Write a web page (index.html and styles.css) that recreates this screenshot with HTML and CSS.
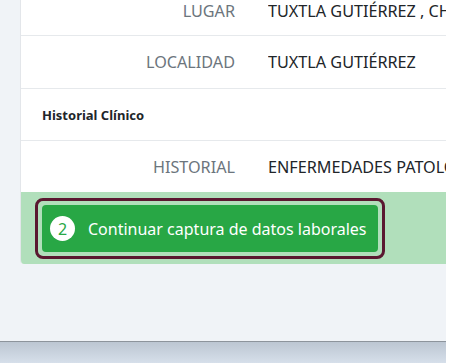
FILE: index.html
```html
<!DOCTYPE html>
<html lang="es">
<head>
<meta charset="utf-8">
<title>Historial</title>
<link rel="stylesheet" href="styles.css">
</head>
<body>
<div class="screen">
  <div class="page">
    <div class="card">
      <div class="row first">
        <div class="label">LUGAR</div>
        <div class="value">TUXTLA GUTIÉRREZ , CHIAPAS</div>
      </div>
      <div class="row">
        <div class="label">LOCALIDAD</div>
        <div class="value">TUXTLA GUTIÉRREZ</div>
      </div>
      <div class="section">Historial Clínico</div>
      <div class="row last">
        <div class="label">HISTORIAL</div>
        <div class="value">ENFERMEDADES PATOLÓGICAS</div>
      </div>
      <div class="footer">
        <div class="ring">
          <button class="btn"><span class="num">2</span><span class="btn-text">Continuar captura de datos laborales</span></button>
        </div>
      </div>
    </div>
  </div>
  <div class="taskbar"></div>
</div>
</body>
</html>
```
FILE: styles.css
```css
html, body {
  margin: 0;
  padding: 0;
  background: #ffffff;
  font-family: "Noto Sans", "Open Sans", sans-serif;
  overflow: hidden;
}
.screen {
  width: 446px;
  display: flex;
  flex-direction: column;
}
.page {
  height: 341px;
  padding-left: 20px;
  background: #f0f3f7;
  overflow: hidden;
}
.card {
  margin-top: -14px;
  background: #ffffff;
  border-left: 1px solid #e3e6ea;
  border-bottom-left-radius: 4px;
  overflow: hidden;
}
.row {
  display: grid;
  grid-template-columns: 214px 1fr;
  column-gap: 33px;
  align-items: center;
  height: 52px;
  border-bottom: 1px solid #e6e9ec;
  font-size: 16.2px;
  white-space: nowrap;
}
.row.first {
  height: 49px;
}
.row.last {
  height: 51px;
  border-bottom: none;
}
.label {
  text-align: right;
  color: #6c757d;
}
.value {
  color: #212529;
  overflow: hidden;
}
.section {
  height: 51px;
  display: flex;
  align-items: center;
  padding-left: 21px;
  font-size: 13px;
  font-weight: 700;
  color: #212529;
  border-bottom: 1px solid #e6e9ec;
}
.footer {
  background: #b1dfbb;
  padding: 6px 0 5px 14px;
}
.ring {
  display: inline-block;
  vertical-align: top;
  border: 3px solid #5a1830;
  border-radius: 8px;
  padding: 4px;
}
.btn {
  display: flex;
  align-items: center;
  justify-content: flex-start;
  width: 336px;
  height: 47px;
  padding: 0 8px;
  border: none;
  border-radius: 4px;
  background: #28a745;
  color: #ffffff;
  font-family: inherit;
  font-size: 16px;
  white-space: nowrap;
  cursor: pointer;
}
.num {
  flex: none;
  display: inline-flex;
  align-items: center;
  justify-content: center;
  width: 25px;
  height: 25px;
  border-radius: 50%;
  background: #ffffff;
  color: #28a745;
  font-size: 16px;
  margin-right: 13px;
}
.btn-text {
  white-space: nowrap;
}
.taskbar {
  height: 21px;
  border-top: 1px solid #8d949c;
  background: linear-gradient(#bcc6d2, #d6dfea);
}
```
